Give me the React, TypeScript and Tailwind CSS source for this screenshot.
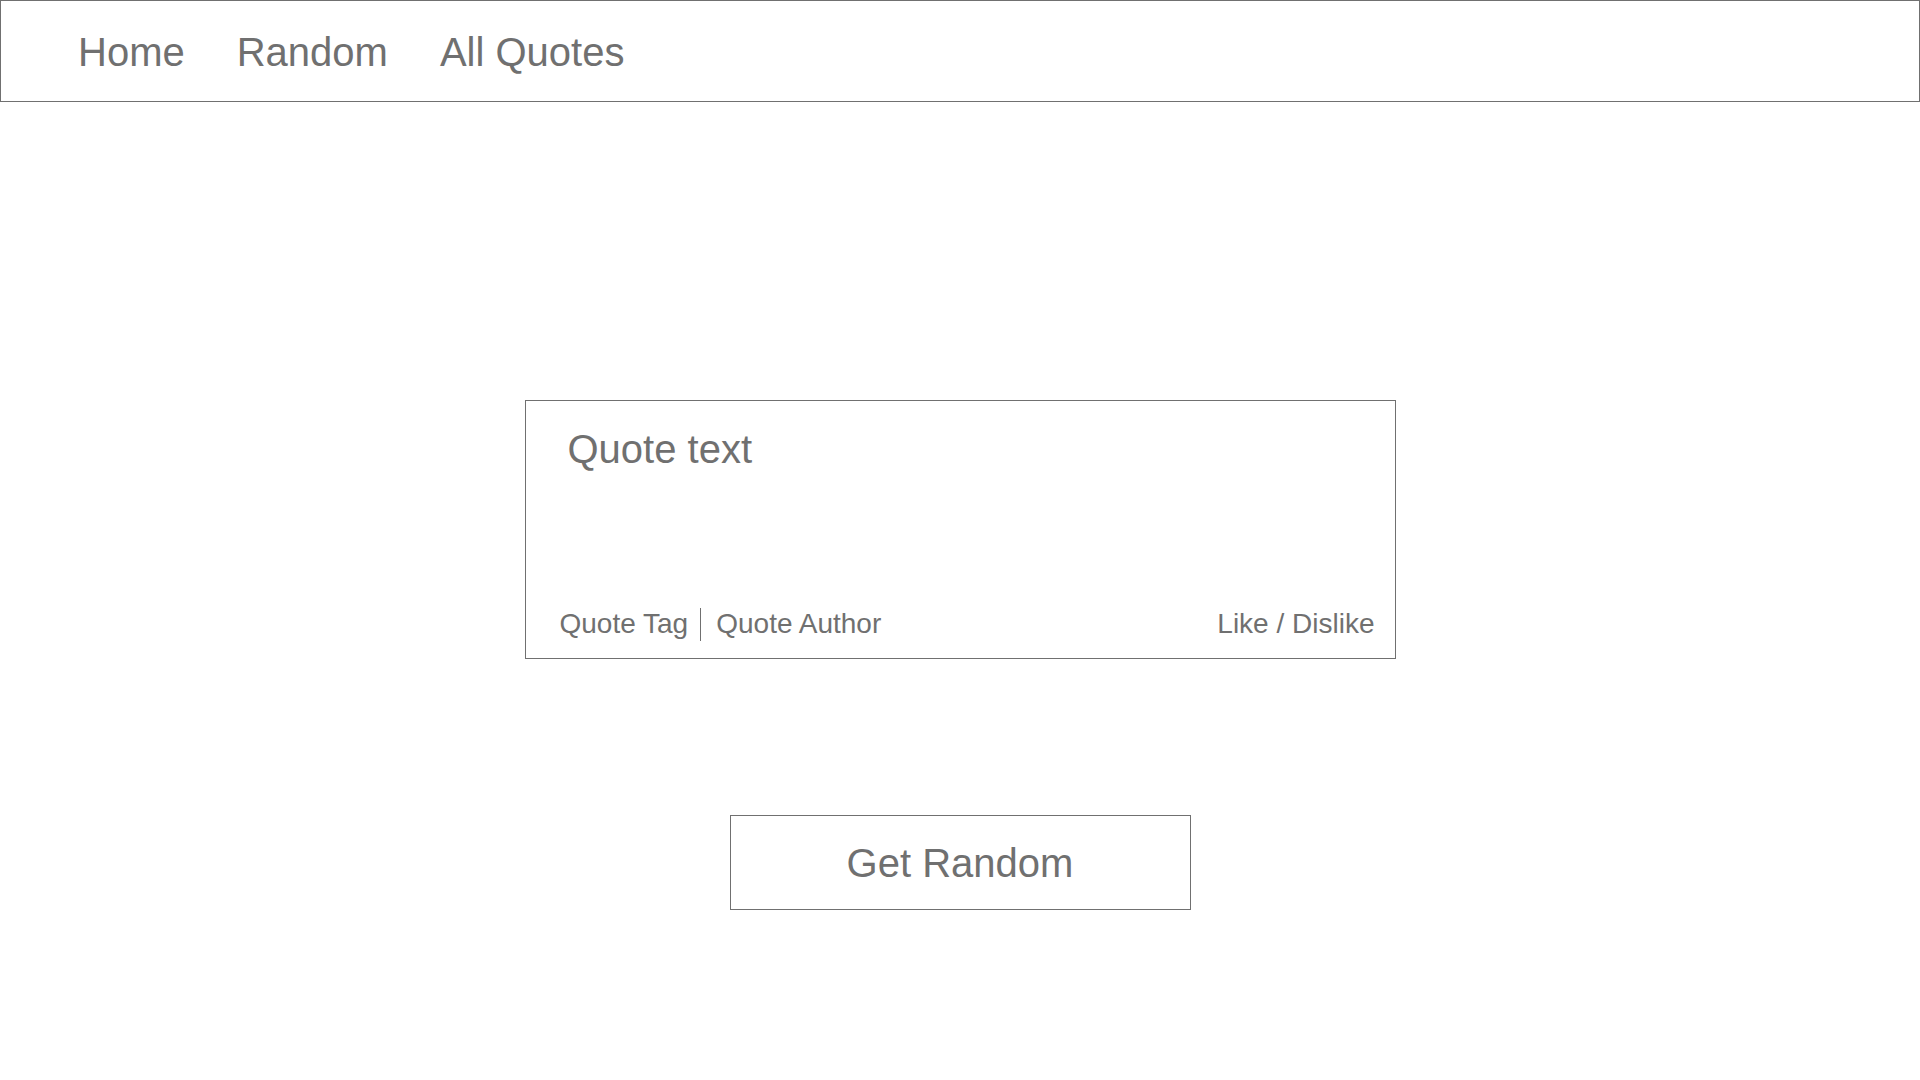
const font = { fontFamily: '"Liberation Sans", Arial, sans-serif' };

const NavBar = () => {
  return (
    <nav className="flex h-[102px] items-center gap-[52px] border border-[#707070] pl-[77px] pt-[2px] text-[40px] text-[#707070]">
      <a className="leading-none">Home</a>
      <a className="leading-none">Random</a>
      <a className="leading-none">All Quotes</a>
    </nav>
  );
};

const QuoteCard = () => {
  return (
    <div className="flex h-[259px] w-[871px] flex-col justify-between border border-[#707070] text-[#707070]">
      <div className="pl-[42px] pt-[25px] text-[40px] leading-[46px]">Quote text</div>
      <div className="flex items-center justify-between pb-[13px] pl-[34px] pr-[20px] text-[28px]">
        <div className="flex items-center">
          <span>Quote Tag</span>
          <span className="ml-[12px] mr-[15px] h-[33px] w-px bg-[#707070]" />
          <span>Quote Author</span>
        </div>
        <span>Like / Dislike</span>
      </div>
    </div>
  );
};

export default function App() {
  return (
    <div className="min-h-screen bg-white" style={font}>
      <NavBar />
      <main className="flex flex-col items-center pt-[298px]">
        <QuoteCard />
        <button className="mt-[156px] flex h-[95px] w-[461px] items-center justify-center border border-[#707070] text-[40px] text-[#707070]">
          Get Random
        </button>
      </main>
    </div>
  );
}
